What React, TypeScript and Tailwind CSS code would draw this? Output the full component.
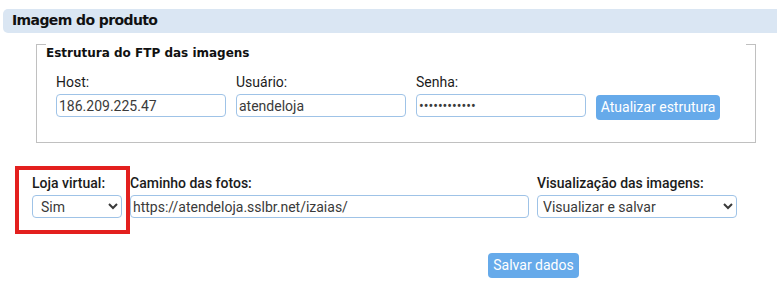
import { useState } from "react";

const inputCls =
    "h-[23px] border border-[#9fc3e7] rounded-[4px] px-[2px] text-[14px] text-[#3a3a3a] bg-white outline-none font-['Roboto']";

const Field = ({
    label,
    width,
    children,
    medium,
}: {
    label: string;
    width: string;
    children: React.ReactNode;
    medium?: boolean;
}) => (
    <div className={`flex flex-col ${width}`}>
        <label
            className={`leading-[17px] mb-[3px] text-[14px] text-[#1b1b1b] ${medium ? "font-medium" : "font-normal"}`}
        >
            {label}
        </label>
        {children}
    </div>
);

export default function App() {
    const [host, setHost] = useState("186.209.225.47");
    const [user, setUser] = useState("atendeloja");
    const [pass, setPass] = useState("abcdefghijkl");
    const [path, setPath] = useState("https://atendeloja.sslbr.net/izaias/");

    return (
        <div className="w-[777px] h-[287px] overflow-hidden bg-white font-['Roboto'] text-[14px] text-[#1b1b1b]">
            <div className="pt-[9px] pl-[3px]">
                <div className="h-[24px] bg-[#dae6f3] rounded-l-[5px] pl-[9px] pb-[2px] flex items-center font-['DejaVu_Sans'] font-bold text-[14px] tracking-[-0.6px] text-[#111]">
                    Imagem do produto
                </div>
            </div>

            {/* estrutura ftp */}
            <div className="mt-[11px] ml-[36px] w-[720px] h-[99px] border-x border-b border-[#c0c0c0]">
                <div className="-mx-px flex justify-between h-px">
                    <div className="w-[10px] bg-[#c0c0c0]" />
                    <div className="w-[10px] bg-[#c0c0c0]" />
                </div>
                <div className="pl-[9px] mt-px leading-[14px] font-['DejaVu_Sans'] font-bold text-[12px] text-[#111]">
                    Estrutura do FTP das imagens
                </div>
                <div className="flex gap-[10px] pl-[19px] mt-[14px]">
                    <Field label="Host:" width="w-[170px]">
                        <input className={inputCls} value={host} onChange={(e) => setHost(e.target.value)} />
                    </Field>
                    <Field label="Usuário:" width="w-[170px]">
                        <input className={inputCls} value={user} onChange={(e) => setUser(e.target.value)} />
                    </Field>
                    <Field label="Senha:" width="w-[170px]">
                        <input
                            type="password"
                            className={inputCls}
                            value={pass}
                            onChange={(e) => setPass(e.target.value)}
                        />
                    </Field>
                    <button className="mt-[21px] h-[25px] w-[124px] rounded-[4px] bg-[#66aaea] text-white text-[14px] leading-[25px]">
                        Atualizar estrutura
                    </button>
                </div>
            </div>

            {/* loja virtual / caminho / visualizacao */}
            <div className="relative mt-[32px] pl-[32px] flex gap-[8px]">
                <Field label="Loja virtual:" width="w-[90px]" medium>
                    <select className={`${inputCls} pl-[4px]`} defaultValue="Sim">
                        <option>Sim</option>
                        <option>Não</option>
                    </select>
                </Field>
                <Field label="Caminho das fotos:" width="w-[399px]" medium>
                    <input className={inputCls} value={path} onChange={(e) => setPath(e.target.value)} />
                </Field>
                <Field label="Visualização das imagens:" width="w-[200px]" medium>
                    <select className={`${inputCls} pl-[1px]`} defaultValue="Visualizar e salvar">
                        <option>Visualizar e salvar</option>
                        <option>Somente visualizar</option>
                    </select>
                </Field>
                <div className="absolute left-[15px] top-[-9px] w-[115px] h-[68px] border-4 border-[#e3201e] pointer-events-none" />
            </div>

            <button className="mt-[35px] ml-[488px] h-[25px] w-[91px] rounded-[4px] bg-[#66aaea] text-white text-[14px] leading-[25px]">
                Salvar dados
            </button>
        </div>
    );
}
